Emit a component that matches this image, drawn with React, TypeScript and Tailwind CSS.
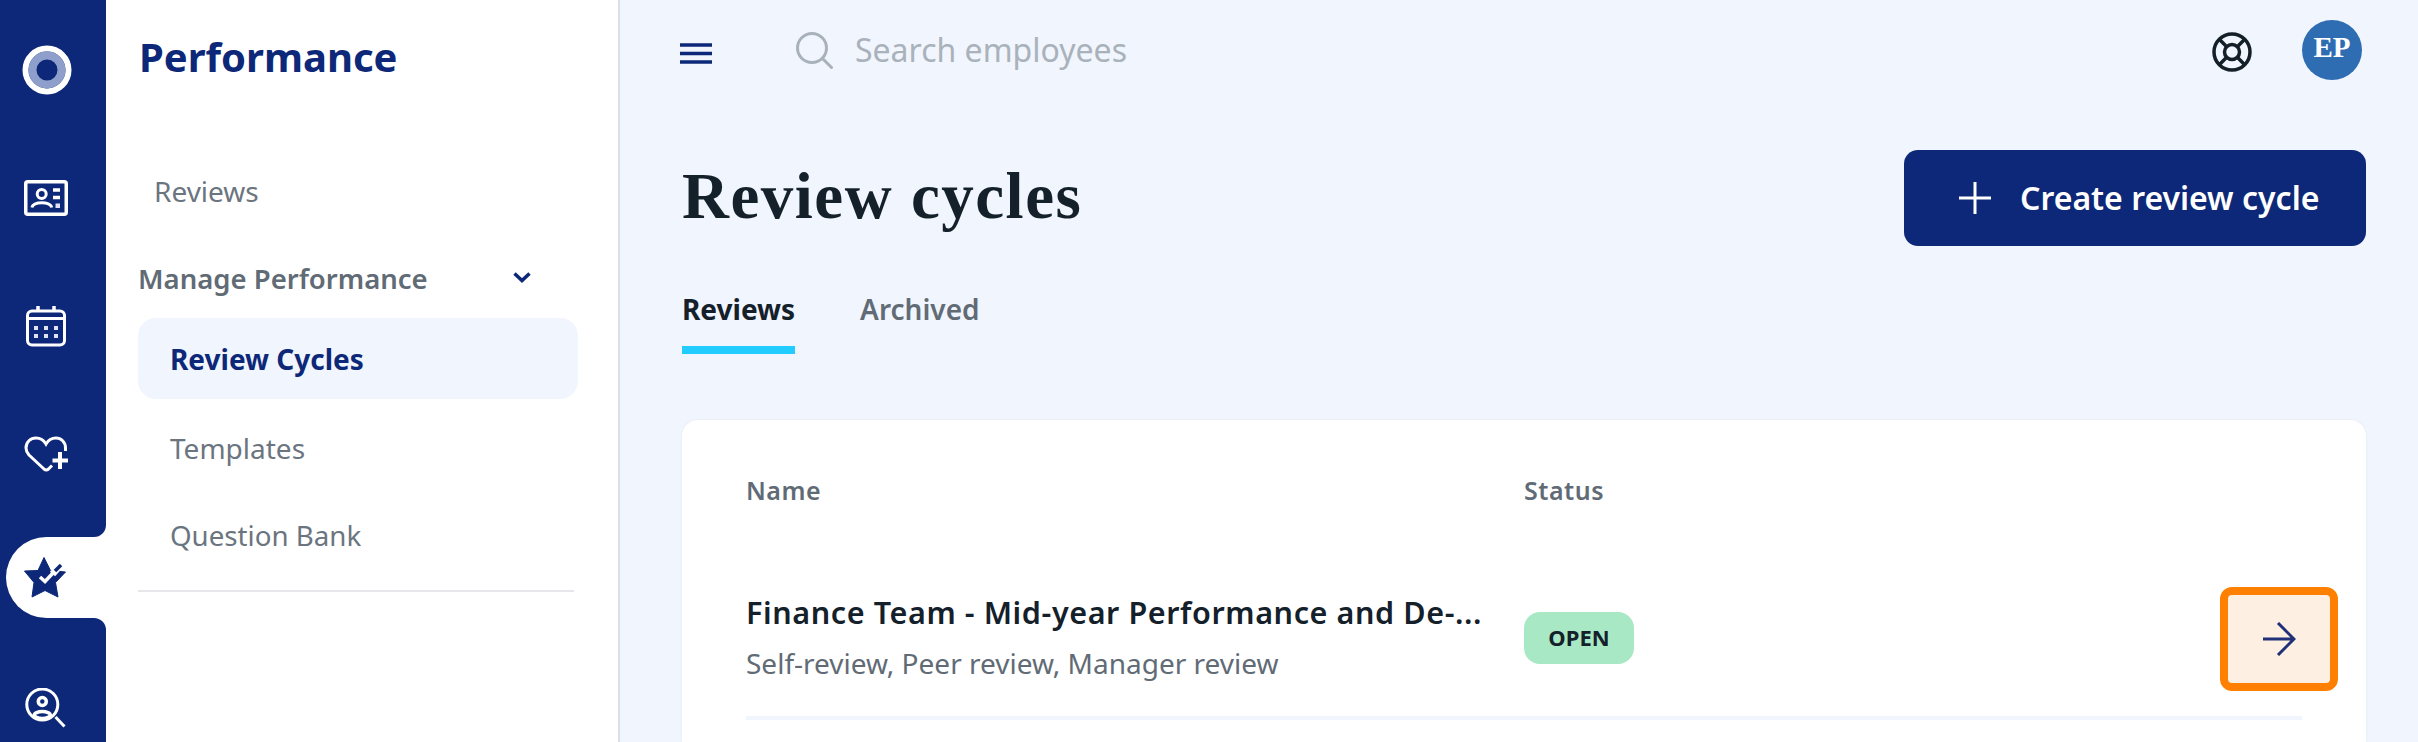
import React from "react";

const Logo = () => (
  <svg width="50" height="50" viewBox="0 0 50 50" fill="none">
    <circle cx="25" cy="25" r="21.5" stroke="#ffffff" strokeWidth="6" />
    <circle cx="25" cy="25" r="14.5" stroke="#8f9fcb" strokeWidth="8" />
  </svg>
);

const CardIcon = () => (
  <svg width="44" height="36" viewBox="0 0 44 36" fill="none" stroke="#fff">
    <rect x="1.75" y="1.75" width="40.5" height="32.5" rx="2" strokeWidth="3.5" />
    <circle cx="17.7" cy="14" r="4.5" strokeWidth="3" />
    <path d="M8 27.5C9 21 26.5 21 27.7 27.5" strokeWidth="3" />
    <path d="M29 10H36M29 17.5H36" strokeWidth="3.5" />
    <rect x="31.5" y="23.5" width="4.5" height="4.5" fill="#dfe3f1" stroke="none" />
  </svg>
);

const CalendarIcon = () => (
  <svg width="40" height="41" viewBox="0 0 40 41" fill="none" stroke="#fff">
    <rect x="1.5" y="5" width="37" height="34" rx="4.5" strokeWidth="3" />
    <path d="M1.5 12.5H38.5" strokeWidth="3" />
    <path d="M12 0V6M28 0V6" strokeWidth="3.5" />
    <g fill="#dfe3f1" stroke="none">
      <rect x="8" y="20" width="4" height="4" />
      <rect x="18" y="20" width="4" height="4" />
      <rect x="28" y="20" width="4" height="4" />
      <rect x="8" y="28" width="4" height="4" />
      <rect x="18" y="28" width="4" height="4" />
      <rect x="28" y="28" width="4" height="4" />
    </g>
  </svg>
);

const HeartPlusIcon = () => (
  <svg width="44" height="36" viewBox="0 0 44 36" fill="none" stroke="#fff">
    <path
      d="M41.5 15V12C41.5 6 37 2 32 2C27.5 2 24 4.5 22 8C20 4.5 16.5 2 12 2C6.5 2 2 6 2 12C2 15 3.2 17 5 19L20 33C21.5 34.3 23 34.3 24.5 33L28 29.5"
      strokeWidth="3"
    />
    <path d="M28.5 24.5H44M36 16V33" strokeWidth="4" />
  </svg>
);

const StarIcon = () => (
  <svg width="42" height="41" viewBox="0 0 42 41" fill="none">
    <path
      d="M20 0.5L26.5 13.5L41.5 15L31.5 25.5L34 40L21 33.5L8 40L10 25.5L0.5 14L14 13.5Z"
      fill="#0d2878"
      stroke="#0d2878"
      strokeWidth="1"
      strokeLinejoin="round"
    />
    <path d="M16 20L21 24.5L29 16" stroke="#fff" strokeWidth="3.5" />
    <path d="M28.5 17L33 12" stroke="#fff" strokeWidth="7" />
    <path d="M31 14L37 8" stroke="#0d2878" strokeWidth="3.5" />
  </svg>
);

const PersonSearchIcon = () => (
  <svg width="42" height="41" viewBox="0 0 42 41" fill="none" stroke="#fff" strokeWidth="3">
    <circle cx="17.3" cy="16.5" r="15.5" />
    <circle cx="17.3" cy="13.5" r="4" strokeWidth="3.5" />
    <ellipse cx="17.3" cy="27" rx="8" ry="3.5" strokeWidth="3.5" />
    <path d="M30.5 29L39.5 38.5" />
  </svg>
);

const Hamburger = () => (
  <svg width="32" height="21" viewBox="0 0 32 21" fill="none" stroke="#0d2878" strokeWidth="3.5">
    <path d="M0 2H32M0 10.5H32M0 19H32" />
  </svg>
);

const SearchIcon = () => (
  <svg width="37" height="37" viewBox="0 0 37 37" fill="none" stroke="#a9b2ba" strokeWidth="3">
    <circle cx="16" cy="16" r="14.5" />
    <path d="M26.5 26.5L35.5 35.5" strokeLinecap="round" />
  </svg>
);

const LifeBuoy = () => (
  <svg width="40" height="40" viewBox="0 0 40 40" fill="none" stroke="#141f28" strokeWidth="3.5">
    <circle cx="20" cy="20" r="18" />
    <circle cx="20" cy="20" r="7.5" />
    <path d="M7.3 7.3L14.7 14.7M32.7 7.3L25.3 14.7M7.3 32.7L14.7 25.3M32.7 32.7L25.3 25.3" />
  </svg>
);

const Plus = () => (
  <svg width="32" height="32" viewBox="0 0 32 32" fill="none" stroke="#fff" strokeWidth="3">
    <path d="M0 16H32M16 0V32" />
  </svg>
);

const Arrow = () => (
  <svg width="34" height="34" viewBox="0 0 34 34" fill="none" stroke="#1f2f78" strokeWidth="3">
    <path d="M1 17H32M16 1L32 17L16 33" />
  </svg>
);

const Chevron = () => (
  <svg width="18" height="11" viewBox="0 0 18 11" fill="none" stroke="#0d2878" strokeWidth="3.5">
    <path d="M1.5 1.5L9 8.5L16.5 1.5" />
  </svg>
);

export default function App() {
  return (
    <div className="flex h-[742px] w-[2418px] overflow-hidden bg-[#f1f5fd] font-['Noto_Sans',sans-serif]">
      {/* icon rail */}
      <nav className="flex w-[106px] shrink-0 flex-col bg-[#0d2878] pt-[6px]">
        <div className="flex h-[128px] shrink-0 items-center justify-center pr-[12px]">
          <Logo />
        </div>
        <div className="flex h-[128px] shrink-0 items-center justify-center pr-[14px]">
          <CardIcon />
        </div>
        <div className="flex h-[128px] shrink-0 items-center justify-center pr-[14px]">
          <CalendarIcon />
        </div>
        <div className="flex h-[128px] shrink-0 items-center justify-center pr-[14px]">
          <HeartPlusIcon />
        </div>
        <div className="flex h-[119px] shrink-0 items-center">
          <div className="relative ml-[6px] flex h-[81px] w-[100px] items-center rounded-l-full bg-white pl-[18px]">
            <StarIcon />
            <div className="absolute -top-[12px] right-0 h-[12px] w-[12px] bg-white">
              <div className="h-full w-full rounded-br-[12px] bg-[#0d2878]" />
            </div>
            <div className="absolute -bottom-[12px] right-0 h-[12px] w-[12px] bg-white">
              <div className="h-full w-full rounded-tr-[12px] bg-[#0d2878]" />
            </div>
          </div>
        </div>
        <div className="flex h-[142px] shrink-0 items-center justify-center pr-[14px]">
          <PersonSearchIcon />
        </div>
      </nav>

      {/* section sidebar */}
      <aside className="w-[514px] shrink-0 border-r-2 border-[#dcdfe8] bg-white pl-[32px] pr-[44px]">
        <h2 className="flex h-[114px] items-center pl-[1px] text-[40px] font-bold text-[#0d2878]">Performance</h2>
        <div className="flex h-[121px] items-end pb-[23px] pl-[16px] text-[28px] text-[#6b7580]">Reviews</div>
        <div className="flex h-[83px] items-center pt-[5px] text-[27.5px] font-semibold text-[#616b76]">
          <span>Manage Performance</span>
          <span className="mr-[43px] mb-[4px] ml-auto">
            <Chevron />
          </span>
        </div>
        <div className="flex h-[81px] w-[440px] items-center rounded-[18px] bg-[#f1f5fd] pt-[1px] pl-[32px] text-[28px] font-bold text-[#0d2878]">
          Review Cycles
        </div>
        <div className="flex h-[97px] items-center pl-[32px] text-[28px] text-[#6b7580]">Templates</div>
        <div className="flex h-[81px] items-center pb-[2px] pl-[32px] text-[27.7px] text-[#6b7580]">Question Bank</div>
        <div className="mt-[13px] h-[2px] w-[436px] bg-[#e5e7eb]" />
      </aside>

      {/* main */}
      <main className="flex min-w-0 flex-1 flex-col pr-[52px] pl-[62px]">
        <header className="flex h-[100px] shrink-0 items-center">
          <span className="mt-[6px] -ml-[2px]">
            <Hamburger />
          </span>
          <span className="ml-[84px]">
            <SearchIcon />
          </span>
          <span className="ml-[22px] text-[32px] text-[#a9b2ba]">Search employees</span>
          <span className="mt-[3px] ml-auto">
            <LifeBuoy />
          </span>
          <span className="ml-[50px] mr-[4px] flex h-[60px] w-[60px] items-center justify-center rounded-full bg-[#2f6db3] pb-[4px] font-['Liberation_Serif',serif] text-[29px] font-bold text-white">
            EP
          </span>
        </header>

        <div className="mt-[50px] flex h-[96px] shrink-0 items-center justify-between">
          <h1 className="pb-[2px] font-['Liberation_Serif',serif] text-[65px] font-bold tracking-[1.5px] text-[#14202a]">
            Review cycles
          </h1>
          <button className="flex h-[96px] w-[462px] items-center rounded-[14px] bg-[#0d2878] pl-[55px] text-[32px] font-semibold text-white">
            <Plus />
            <span className="ml-[29px]">Create review cycle</span>
          </button>
        </div>

        <div className="mt-[42px] flex shrink-0 gap-[65px] text-[28px]">
          <div className="flex h-[66px] flex-col justify-between font-bold">
            <span className="text-[#14202a]">Reviews</span>
            <span className="h-[8px] bg-[#22ccff]" />
          </div>
          <span className="font-semibold text-[#616b76]">Archived</span>
        </div>

        <section className="mt-[66px] flex-1 rounded-t-[16px] bg-white px-[64px] shadow-[0_0_3px_rgba(13,40,120,0.06)]">
          <div className="flex h-[142px] items-center text-[25px] font-semibold tracking-[0.5px] text-[#616b76]">
            <span className="w-[778px]">Name</span>
            <span>Status</span>
          </div>
          <div className="flex h-[158px] items-center border-b-4 border-[#f1f5fd]">
            <div className="w-[778px] min-w-0 pb-[4px]">
              <div className="whitespace-nowrap text-[30.5px] font-semibold tracking-[0.6px] text-[#14202a]">
                Finance Team - Mid-year Performance and De-...
              </div>
              <div className="mt-[7px] text-[28px] text-[#616b76]">Self-review, Peer review, Manager review</div>
            </div>
            <span className="mb-[3px] flex h-[52px] w-[110px] items-center justify-center rounded-[16px] bg-[#a8e8c4] text-[22px] font-bold text-[#14202a]">
              OPEN
            </span>
            <button className="-mr-[36px] ml-auto flex h-[104px] w-[118px] items-center justify-center rounded-[12px] border-8 border-[#ff8000] bg-[#fdf0e3]">
              <Arrow />
            </button>
          </div>
        </section>
      </main>
    </div>
  );
}
